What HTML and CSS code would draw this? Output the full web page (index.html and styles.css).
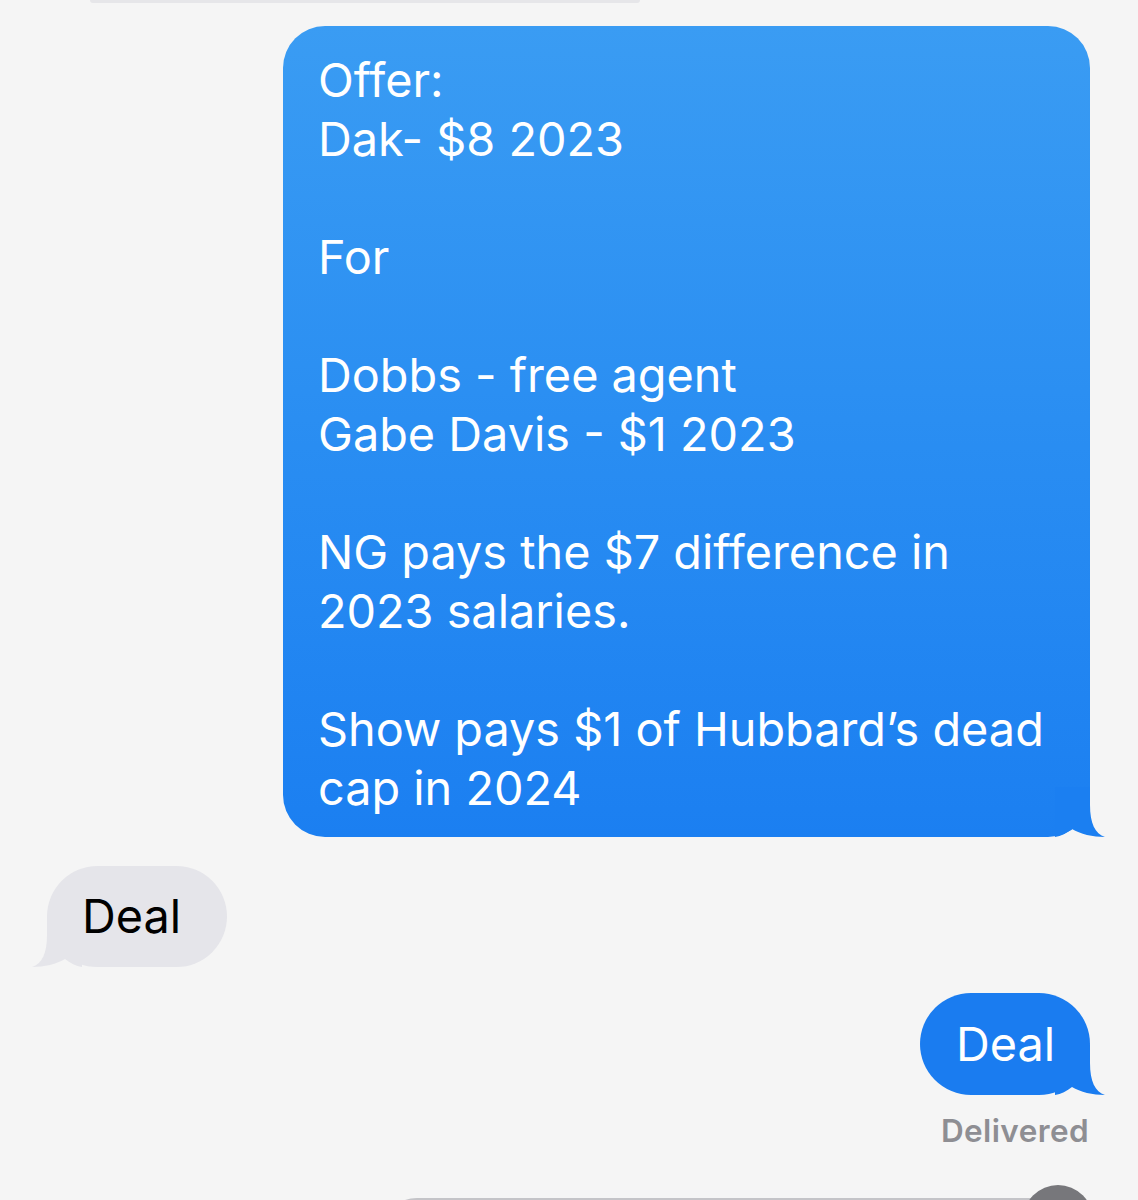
FILE: index.html
```html
<!DOCTYPE html>
<html lang="en">
<head>
<meta charset="utf-8">
<title>Messages</title>
<link rel="stylesheet" href="styles.css">
</head>
<body>
<div class="screen">
  <div class="prev-edge"></div>
  <div class="thread">
    <div class="row sent first">
      <div class="bubble blue big">
        Offer:<br>Dak- $8 2023<br><br>For<br><br>Dobbs - free agent<br>Gabe Davis - $1 2023<br><br>NG pays the $7 difference in<br>2023 salaries.<br><br>Show pays $1 of Hubbard’s dead<br>cap in 2024
        <svg class="tail tail-right" viewBox="0 0 50 50" width="50" height="50"><path d="M35 0 L35 18 C35 36 40 47 50 50 C38 50 25 47 17 42 C12 46 6 49 0 50 L0 0 Z" fill="#1b7ff1"/></svg>
      </div>
    </div>
    <div class="row received">
      <div class="bubble gray">
        Deal
        <svg class="tail tail-left" viewBox="0 0 50 50" width="50" height="50"><path d="M35 0 L35 18 C35 36 40 47 50 50 C38 50 25 47 17 42 C12 46 6 49 0 50 L0 0 Z" fill="#e5e5ea"/></svg>
      </div>
    </div>
    <div class="row sent second">
      <div class="bubble blue small">
        Deal
        <svg class="tail tail-right" viewBox="0 0 50 50" width="50" height="50"><path d="M35 0 L35 18 C35 36 40 47 50 50 C38 50 25 47 17 42 C12 46 6 49 0 50 L0 0 Z" fill="#1a7cf0"/></svg>
      </div>
    </div>
    <div class="status">Delivered</div>
  </div>
  <div class="composer">
    <div class="field">
      <div class="mic"></div>
    </div>
  </div>
</div>
</body>
</html>
```
FILE: styles.css
```css
html, body {
  margin: 0;
  padding: 0;
  background: #f5f5f5;
}
.screen {
  width: 1138px;
  height: 1200px;
  overflow: hidden;
  background: #f5f5f5;
  font-family: Inter, "Liberation Sans", Arial, sans-serif;
}
.prev-edge {
  margin-left: 90px;
  width: 550px;
  height: 3px;
  border-radius: 0 0 3px 3px;
  background: #e6e6e9;
}
.thread {
  padding: 0 48px 0 47px;
  display: flex;
  flex-direction: column;
}
.row {
  display: flex;
}
.row.sent {
  justify-content: flex-end;
}
.row.received {
  justify-content: flex-start;
  margin-top: 29px;
}
.row.first {
  margin-top: 23px;
}
.row.second {
  margin-top: 26px;
}
.bubble {
  position: relative;
  font-size: 46.8px;
  line-height: 59px;
  border-radius: 42px;
  padding: 21px 37px 21px 37px;
}
.bubble.blue {
  color: #ffffff;
  background: #1a7cf0;
}
.bubble.big {
  box-sizing: border-box;
  width: 807px;
  padding: 25px 37px 19px 35px;
  background: linear-gradient(180deg, #3a9cf3 0%, #2b8ff2 45%, #1b7ff1 100%);
}
.bubble.small {
  padding: 22px 35px 21px 36px;
  border-radius: 51px;
}
.bubble.gray {
  color: #000000;
  background: #e5e5ea;
  border-radius: 51px;
  padding: 21px 46px 21px 35px;
}
.tail {
  position: absolute;
  bottom: 0;
  display: block;
}
.tail-right {
  right: -15px;
}
.tail-left {
  left: -15px;
  transform: scaleX(-1);
}
.status {
  align-self: flex-end;
  margin-top: 17px;
  margin-right: 1px;
  font-size: 31.5px;
  line-height: 38px;
  font-weight: 600;
  color: #8e8e93;
  letter-spacing: 0.4px;
}
.composer {
  display: flex;
  margin-top: 48px;
}
.field {
  box-sizing: border-box;
  margin-left: 382px;
  width: 720px;
  height: 70px;
  border: 2px solid #c4c4c8;
  border-radius: 35px;
  display: flex;
  justify-content: flex-end;
}
.mic {
  width: 70px;
  height: 70px;
  margin-top: -15px;
  margin-right: 7px;
  border-radius: 50%;
  background: #77777b;
}
```
